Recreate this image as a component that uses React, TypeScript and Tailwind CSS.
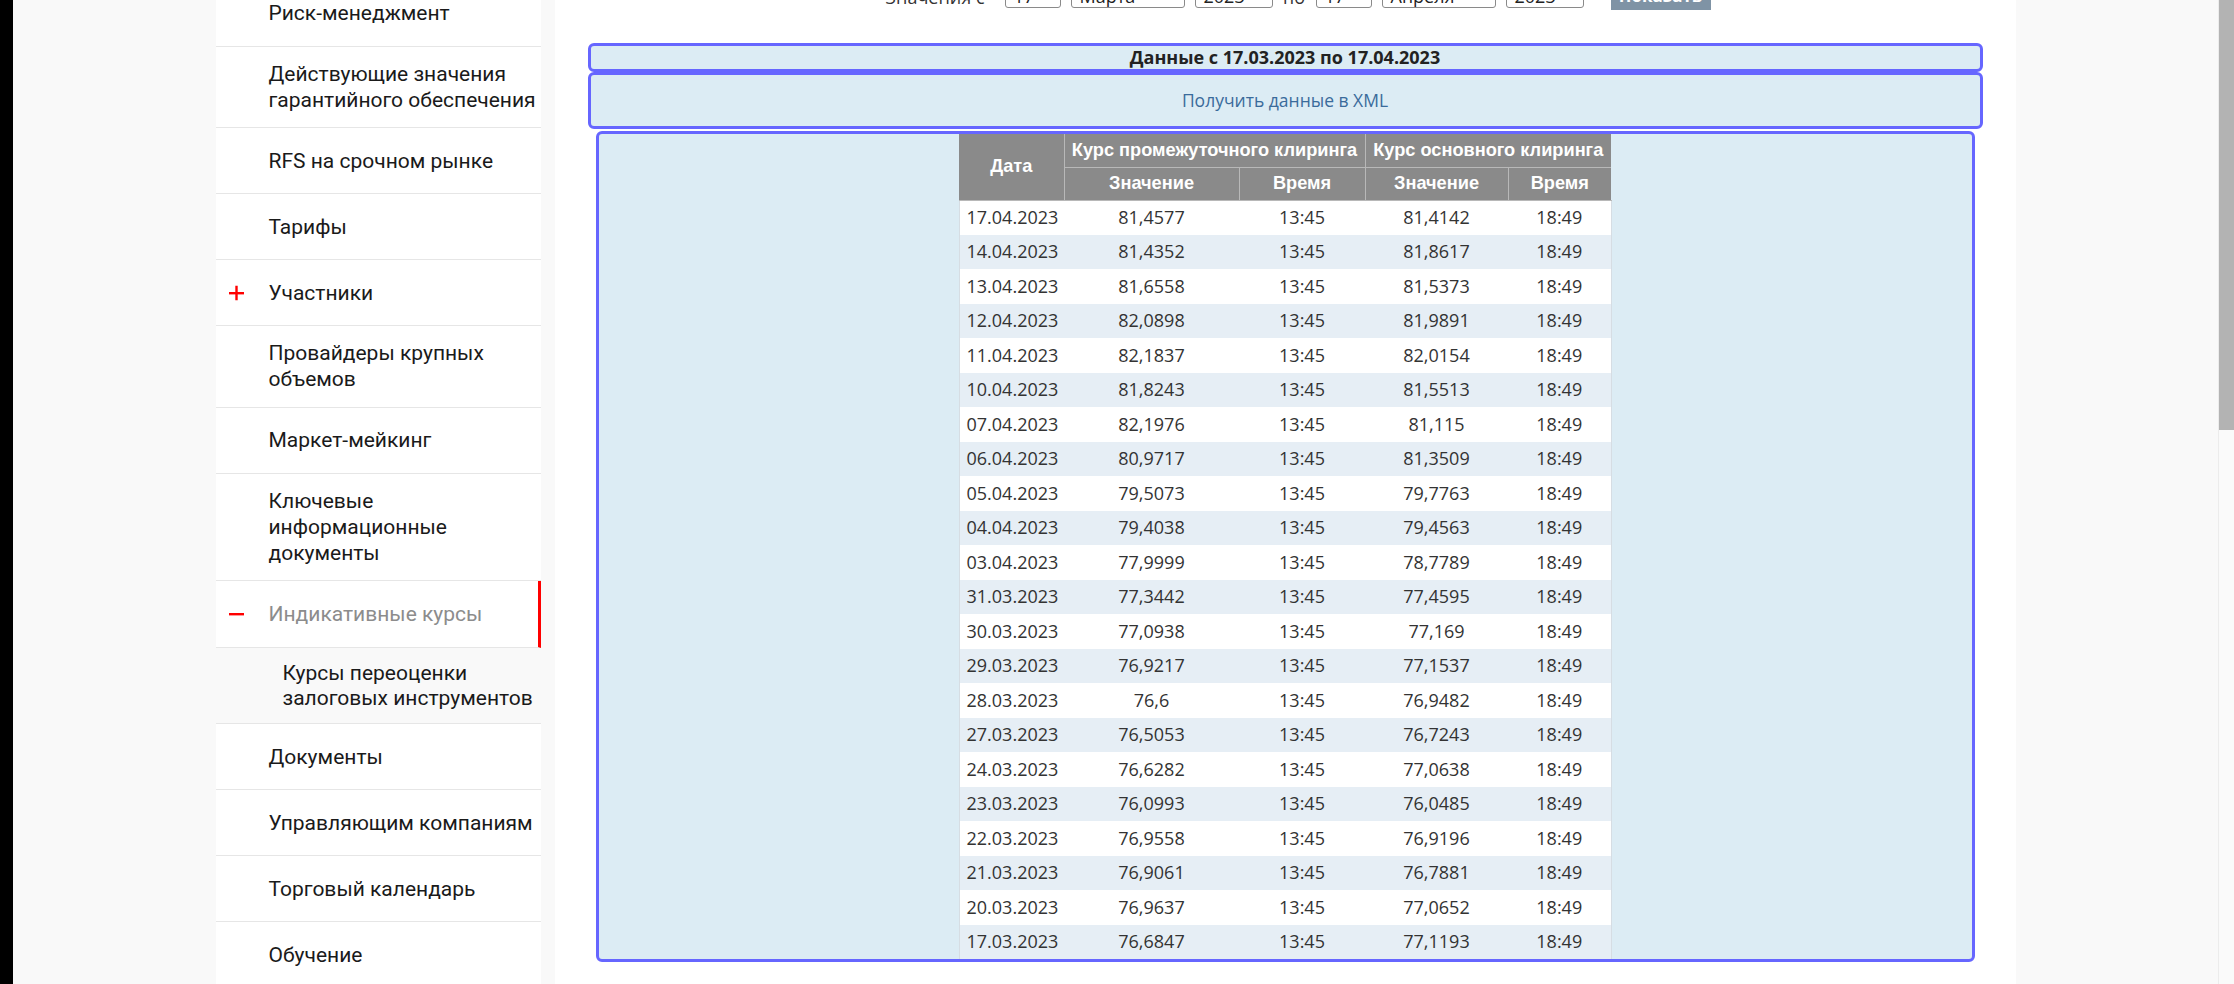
const menu: { lines: string[]; icon?: 'plus' | 'minus'; active?: boolean }[] = [
  { lines: ['Риск-менеджмент'] },
  { lines: ['Действующие значения', 'гарантийного обеспечения'] },
  { lines: ['RFS на срочном рынке'] },
  { lines: ['Тарифы'] },
  { lines: ['Участники'], icon: 'plus' },
  { lines: ['Провайдеры крупных', 'объемов'] },
  { lines: ['Маркет-мейкинг'] },
  { lines: ['Ключевые', 'информационные', 'документы'] },
  { lines: ['Индикативные курсы'], icon: 'minus', active: true },
]

const menuAfter = ['Документы', 'Управляющим компаниям', 'Торговый календарь', 'Обучение']

const rows = [
  ['17.04.2023', '81,4577', '13:45', '81,4142', '18:49'],
  ['14.04.2023', '81,4352', '13:45', '81,8617', '18:49'],
  ['13.04.2023', '81,6558', '13:45', '81,5373', '18:49'],
  ['12.04.2023', '82,0898', '13:45', '81,9891', '18:49'],
  ['11.04.2023', '82,1837', '13:45', '82,0154', '18:49'],
  ['10.04.2023', '81,8243', '13:45', '81,5513', '18:49'],
  ['07.04.2023', '82,1976', '13:45', '81,115', '18:49'],
  ['06.04.2023', '80,9717', '13:45', '81,3509', '18:49'],
  ['05.04.2023', '79,5073', '13:45', '79,7763', '18:49'],
  ['04.04.2023', '79,4038', '13:45', '79,4563', '18:49'],
  ['03.04.2023', '77,9999', '13:45', '78,7789', '18:49'],
  ['31.03.2023', '77,3442', '13:45', '77,4595', '18:49'],
  ['30.03.2023', '77,0938', '13:45', '77,169', '18:49'],
  ['29.03.2023', '76,9217', '13:45', '77,1537', '18:49'],
  ['28.03.2023', '76,6', '13:45', '76,9482', '18:49'],
  ['27.03.2023', '76,5053', '13:45', '76,7243', '18:49'],
  ['24.03.2023', '76,6282', '13:45', '77,0638', '18:49'],
  ['23.03.2023', '76,0993', '13:45', '76,0485', '18:49'],
  ['22.03.2023', '76,9558', '13:45', '76,9196', '18:49'],
  ['21.03.2023', '76,9061', '13:45', '76,7881', '18:49'],
  ['20.03.2023', '76,9637', '13:45', '77,0652', '18:49'],
  ['17.03.2023', '76,6847', '13:45', '77,1193', '18:49'],
]

function PlusMinus({ kind }: { kind: 'plus' | 'minus' }) {
  return (
    <svg width="15" height="15" viewBox="0 0 15 15" className="absolute left-[13px] top-1/2 -translate-y-1/2">
      <rect x="0" y="6.5" width="15" height="2.4" fill="#ff0000" />
      {kind === 'plus' && <rect x="6.3" y="0" width="2.4" height="15" fill="#ff0000" />}
    </svg>
  )
}

function Sidebar() {
  return (
    <aside className="w-[325px] bg-white font-['Roboto',sans-serif] text-[21px] text-[#1a1a1a]">
      <div className="-mt-[19.5px]">
        {menu.map((item, i) => (
          <div
            key={i}
            className={`relative flex min-h-[66px] items-center border-b border-[#e6e6e6] py-[14.25px] pl-[53px] leading-[26px] whitespace-nowrap ${
              item.active ? 'h-[67px] border-r-[3px] border-r-[#ff0000] text-[#8c8c8c]' : ''
            }`}
          >
            {item.icon && <PlusMinus kind={item.icon} />}
            <div>
              {item.lines.map(l => (
                <div key={l}>{l}</div>
              ))}
            </div>
          </div>
        ))}
        <div className="flex h-[76px] items-center border-b border-[#e6e6e6] bg-[#f9f9f9] pl-[67px] text-[21px] leading-[25px] whitespace-nowrap">
          <div>
            <div>Курсы переоценки</div>
            <div>залоговых инструментов</div>
          </div>
        </div>
        {menuAfter.map(label => (
          <div key={label} className="flex min-h-[66px] items-center border-b border-[#e6e6e6] pl-[53px] leading-[26px] whitespace-nowrap">
            {label}
          </div>
        ))}
      </div>
    </aside>
  )
}

function Field({ w, ml, text }: { w: number; ml: number; text: string }) {
  return (
    <div
      className="flex h-[30px] shrink-0 items-end rounded-[3px] border border-[#8a8a8a] bg-white pb-[1px] pl-[8px] text-[18px] leading-[20px] text-[#222]"
      style={{ width: w, marginLeft: ml }}
    >
      {text}
    </div>
  )
}

function FilterRow() {
  return (
    <div className="-mt-[22px] flex h-[32px] items-start pl-[331px] font-['Open_Sans',sans-serif]">
      <div className="flex h-[30px] w-[119px] shrink-0 items-end pb-[1px] text-[18px] leading-[20px] text-[#333]">Значения с</div>
      <Field w={56} ml={0} text="17" />
      <Field w={114} ml={10} text="Марта" />
      <Field w={78} ml={10} text="2023" />
      <div className="flex h-[30px] w-[43px] shrink-0 items-end justify-center pb-[1px] text-[18px] leading-[20px] text-[#333]">по</div>
      <Field w={56} ml={0} text="17" />
      <Field w={114} ml={10} text="Апреля" />
      <Field w={78} ml={10} text="2023" />
      <button className="ml-[27px] flex h-[32px] w-[100px] shrink-0 items-end justify-center bg-[#7f93a5] pb-[2px] text-[17px] font-bold text-white">
        Показать
      </button>
    </div>
  )
}

function RatesTable() {
  const th = 'border border-[#b8b8b8] bg-[#8a8a8a] text-center font-bold text-white'
  return (
    <table className="table-fixed border-collapse font-['Open_Sans',sans-serif] text-[18px] text-[#333]">
      <colgroup>
        <col className="w-[105px]" />
        <col className="w-[175px]" />
        <col className="w-[126px]" />
        <col className="w-[143px]" />
        <col className="w-[103px]" />
      </colgroup>
      <thead className="font-['Liberation_Sans',Arial,sans-serif] text-[18.2px]">
        <tr className="h-[33px]">
          <th rowSpan={2} className={`${th} border-t-0 border-l-0`}>Дата</th>
          <th colSpan={2} className={`${th} border-t-0 whitespace-nowrap`}>Курс промежуточного клиринга</th>
          <th colSpan={2} className={`${th} border-t-0 border-r-0 whitespace-nowrap`}>Курс основного клиринга</th>
        </tr>
        <tr className="h-[33px]">
          <th className={th}>Значение</th>
          <th className={th}>Время</th>
          <th className={th}>Значение</th>
          <th className={`${th} border-r-0`}>Время</th>
        </tr>
      </thead>
      <tbody>
        {rows.map((r, i) => (
          <tr key={r[0]} className={`h-[34.5px] ${i % 2 === 0 ? 'bg-white' : 'bg-[#e6eef5]'}`}>
            <td className="border-l border-[#d6dde3] pl-[7px] whitespace-nowrap">{r[0]}</td>
            <td className="text-center">{r[1]}</td>
            <td className="text-center">{r[2]}</td>
            <td className="text-center">{r[3]}</td>
            <td className="border-r border-[#d6dde3] text-center">{r[4]}</td>
          </tr>
        ))}
      </tbody>
    </table>
  )
}

export default function App() {
  return (
    <div className="flex h-[984px] w-[2234px] overflow-hidden bg-[#f9f9f9]">
      <div className="w-[13px] shrink-0 bg-black" />
      <div className="flex flex-1 justify-center">
        <div className="flex w-[1800px] shrink-0">
          <Sidebar />
          <div className="w-[14px] shrink-0" />
          <main className="w-[1461px] shrink-0 bg-white">
            <FilterRow />
            <div className="mx-[33px] mt-[33px] flex h-[29px] items-center justify-center rounded-[6px] border-[3px] border-[#6666ff] bg-[#dcecf4] font-['Open_Sans',sans-serif] text-[18px] font-bold text-[#222]">
              Данные с 17.03.2023 по 17.04.2023
            </div>
            <div className="mx-[33px] flex h-[57px] items-center justify-center rounded-[6px] border-[3px] border-[#6666ff] bg-[#dcecf4] font-['Open_Sans',sans-serif] text-[17.5px] text-[#3a6b9b]">
              Получить данные в XML
            </div>
            <div className="mx-[41px] mt-[2px] flex h-[831px] justify-center rounded-[6px] border-[3px] border-[#6666ff] bg-[#dcecf4]">
              <RatesTable />
            </div>
          </main>
        </div>
      </div>
      <div className="w-[16px] shrink-0 border-l border-[#ececec] bg-[#fafafa]">
        <div className="h-[430px] bg-[#b3b3b3]" />
      </div>
    </div>
  )
}
